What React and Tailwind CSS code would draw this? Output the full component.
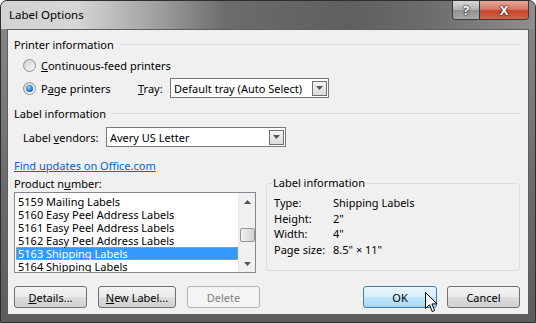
import React from "react";

const items = [
  "5159 Mailing Labels",
  "5160 Easy Peel Address Labels",
  "5161 Easy Peel Address Labels",
  "5162 Easy Peel Address Labels",
  "5163 Shipping Labels",
  "5164 Shipping Labels",
];

const details = [
  ["Type:", "Shipping Labels"],
  ["Height:", "2\""],
  ["Width:", "4\""],
  ["Page size:", "8.5\" × 11\""],
];

const Arrow = ({ up }) => (
  <svg width="7" height="4" viewBox="0 0 7 4">
    <path d={up ? "M0 4 L3.5 0 L7 4 Z" : "M0 0 L7 0 L3.5 4 Z"} fill="#555" />
  </svg>
);

const Heading = ({ children }) => (
  <div className="flex items-center h-[16px] gap-[5px]">
    <span>{children}</span>
    <div className="flex-1 h-px bg-[#d5dfe5]" />
  </div>
);

const Combo = ({ value, width }) => (
  <div className={`${width} h-[20px] flex items-center bg-white border border-[#7a7a7a] pl-[3px] pr-[1px]`}>
    <span className="flex-1">{value}</span>
    <div className="w-[15px] h-[15px] flex items-center justify-center border border-[#707070] bg-[linear-gradient(#f4f4f4,#dcdcdc)]">
      <Arrow />
    </div>
  </div>
);

const Radio = ({ checked }) => (
  <div className="w-[13px] h-[13px] rounded-full border border-[#8e8f8f] bg-[linear-gradient(135deg,#d0d0d0,#fafafa)] flex items-center justify-center">
    {checked && (
      <div className="w-[7px] h-[7px] rounded-full bg-[radial-gradient(circle_at_40%_35%,#8fd0fa,#1e7fc8_55%,#0b4f8a)]" />
    )}
  </div>
);

const Button = ({ children, width, kind }) => {
  let style = "border-[#707070] bg-[linear-gradient(#f2f2f2_0%,#ebebeb_50%,#dddddd_51%,#cfcfcf_100%)] text-black";
  if (kind === "disabled") style = "border-[#adb2b5] bg-[#f4f4f4] text-[#838383]";
  if (kind === "default") style = "border-[#3c7fb1] bg-[linear-gradient(#eaf6fd_0%,#d9f0fc_50%,#bee6fd_51%,#a7d9f5_100%)] text-black";
  return (
    <div className={`${width} h-[22px] flex items-center justify-center rounded-[3px] border ${style}`}>
      {children}
    </div>
  );
};

export default function App() {
  return (
    <div className="relative w-[536px] h-[323px] bg-white overflow-hidden font-['Noto_Sans',sans-serif] text-[11px] leading-none text-black">
      <div className="w-full h-full flex flex-col rounded-t-[7px] border border-[#2e2e2e] bg-[linear-gradient(#8a8a8a,#6a6a6a_60%,#5c5c5c)]">
        {/* title bar */}
        <div className="h-[28px] flex items-start bg-[linear-gradient(90deg,#d2d2d2_0%,#d6d6d6_14%,#a4a4a4_28%,#6c6c6c_42%,#5f5f5f_65%,#6c6c6c_80%,#8e8e8e_100%)] rounded-t-[6px]">
          <span className="mt-[8px] ml-[8px] text-[11.5px]">Label Options</span>
          <div className="flex-1" />
          <div className="flex mr-[6px] h-[19px] rounded-b-[4px] border border-t-0 border-[#3a3a3a] overflow-hidden">
            <div className="w-[27px] flex items-center justify-center bg-[linear-gradient(#d8d8d8,#b0b0b0_50%,#8f8f8f_51%,#a8a8a8)] border-r border-[#3a3a3a] text-white font-bold text-[13px] [text-shadow:0_0_1px_#222,0_0_1px_#222,0_0_2px_#222]">
              ?
            </div>
            <div className="w-[48px] flex items-center justify-center bg-[linear-gradient(#e8a898,#d77a64_45%,#c7432b_55%,#d4644a)] text-white font-bold text-[13px] [text-shadow:0_0_1px_#3a0a00,0_0_1px_#3a0a00,0_0_2px_#3a0a00]">
              X
            </div>
          </div>
        </div>

        {/* client area */}
        <div className="flex-1 mx-[6px] mb-[7px] bg-[#f0f0f0] border border-[#5e5e5e] pl-[6px] pr-[7px] flex flex-col">
          <div className="mt-[6px]">
            <Heading>Printer information</Heading>
          </div>
          <div className="mt-[5px] h-[16px] flex items-center ml-[9px] gap-[5px]">
            <Radio />
            <span>
              <span className="underline">C</span>ontinuous-feed printers
            </span>
          </div>
          <div className="mt-[5px] h-[20px] flex items-center ml-[9px]">
            <div className="w-[115px] flex items-center gap-[5px]">
              <Radio checked />
              <span>
                P<span className="underline">a</span>ge printers
              </span>
            </div>
            <span className="w-[32px]">
              <span className="underline">T</span>ray:
            </span>
            <Combo value="Default tray (Auto Select)" width="w-[159px]" />
          </div>

          <div className="mt-[7px]">
            <Heading>Label information</Heading>
          </div>
          <div className="mt-[6px] h-[20px] flex items-center ml-[9px]">
            <span className="w-[83px]">
              Label <span className="underline">v</span>endors:
            </span>
            <Combo value="Avery US Letter" width="w-[180px]" />
          </div>

          <div className="mt-[10px] h-[16px] flex items-center">
            <span className="text-[#0066cc] underline">Find updates on Office.com</span>
          </div>

          <div className="mt-[2px] flex items-start">
            <div className="w-[242px] flex flex-col">
              <div className="h-[16px] flex items-center">
                <span>
                  Product n<span className="underline">u</span>mber:
                </span>
              </div>
              <div className="mt-[1px] h-[81px] bg-white border border-[#828790] flex overflow-hidden">
                <div className="flex-1 pt-[1.5px] pl-[1px]">
                  {items.map((it, i) => (
                    <div
                      key={it}
                      className={`h-[13px] leading-[13px] pl-[2px] ${
                        i === 4 ? "bg-[#3399ff] text-white outline-1 outline-dotted outline-[#e8a040] -outline-offset-1" : ""
                      }`}
                    >
                      {it}
                    </div>
                  ))}
                </div>
                <div className="w-[17px] bg-[#f0f0f0] border-l border-[#e8e8e8] flex flex-col items-center">
                  <div className="h-[17px] flex items-center justify-center">
                    <Arrow up />
                  </div>
                  <div className="mt-[18px] w-[15px] h-[14px] rounded-[2px] border border-[#959595] bg-[linear-gradient(90deg,#f3f3f3,#e2e2e2_50%,#d2d2d2)]" />
                  <div className="flex-1" />
                  <div className="h-[17px] flex items-center justify-center">
                    <Arrow />
                  </div>
                </div>
              </div>
            </div>

            <fieldset className="ml-[10px] w-[254px] h-[96px] border border-[#d5dfe5] rounded-[3px] pl-[7px] pt-[4px]">
              <legend className="-ml-[2px] px-[1px] h-[16px] leading-[16px]">Label information</legend>
              {details.map(([k, v]) => (
                <div key={k} className="h-[15.5px] flex items-center">
                  <span className="w-[59px]">{k}</span>
                  <span>{v}</span>
                </div>
              ))}
            </fieldset>
          </div>

          <div className="mt-[13px] flex items-center">
            <Button width="w-[73px]">
              <span>
                <span className="underline">D</span>etails...
              </span>
            </Button>
            <div className="w-[11px]" />
            <Button width="w-[78px]">
              <span>
                <span className="underline">N</span>ew Label...
              </span>
            </Button>
            <div className="w-[11px]" />
            <Button width="w-[73px]" kind="disabled">
              Delete
            </Button>
            <div className="flex-1" />
            <Button width="w-[74px]" kind="default">
              OK
            </Button>
            <div className="w-[10px]" />
            <Button width="w-[73px]">Cancel</Button>
            <div className="w-[1px]" />
          </div>
        </div>
      </div>

      {/* mouse pointer */}
      <svg className="absolute left-[425px] top-[292px]" width="13" height="21" viewBox="0 0 13 21">
        <path
          d="M0.5 0.5 L0.5 16.5 L4.5 12.8 L7.2 19.5 L9.6 18.5 L6.9 11.9 L12 11.9 Z"
          fill="#fff"
          stroke="#000"
          strokeWidth="1"
          strokeLinejoin="miter"
        />
      </svg>
    </div>
  );
}
